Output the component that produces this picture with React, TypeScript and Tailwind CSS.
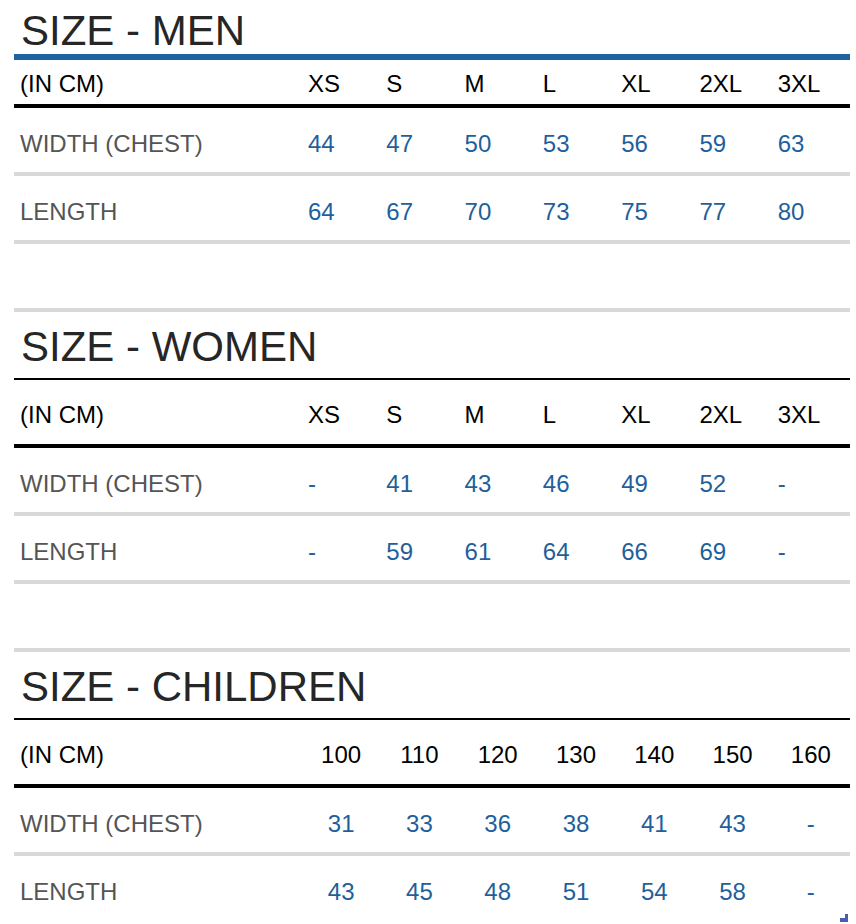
type Section = {
  title: string;
  sizes: string[];
  rows: { label: string; values: string[] }[];
  center?: boolean;
};

const sections: Section[] = [
  {
    title: "SIZE - MEN",
    sizes: ["XS", "S", "M", "L", "XL", "2XL", "3XL"],
    rows: [
      { label: "WIDTH (CHEST)", values: ["44", "47", "50", "53", "56", "59", "63"] },
      { label: "LENGTH", values: ["64", "67", "70", "73", "75", "77", "80"] },
    ],
  },
  {
    title: "SIZE - WOMEN",
    sizes: ["XS", "S", "M", "L", "XL", "2XL", "3XL"],
    rows: [
      { label: "WIDTH (CHEST)", values: ["-", "41", "43", "46", "49", "52", "-"] },
      { label: "LENGTH", values: ["-", "59", "61", "64", "66", "69", "-"] },
    ],
  },
  {
    title: "SIZE - CHILDREN",
    sizes: ["100", "110", "120", "130", "140", "150", "160"],
    rows: [
      { label: "WIDTH (CHEST)", values: ["31", "33", "36", "38", "41", "43", "-"] },
      { label: "LENGTH", values: ["43", "45", "48", "51", "54", "58", "-"] },
    ],
    center: true,
  },
];

function SizeTable({ section, first, last }: { section: Section; first: boolean; last: boolean }) {
  const cell = section.center ? "text-center" : "pl-[6px]";
  return (
    <div>
      {/* title */}
      <div
        className={
          first
            ? "h-[54px] pt-[7px] pl-[7px] text-[42px] leading-[48px] text-[#262626]"
            : "h-[66px] pt-[11px] pl-[7px] text-[42px] leading-[48px] text-[#262626]"
        }
      >
        {section.title}
      </div>
      <div className={first ? "h-[6px] bg-[#1f64a0]" : "h-[2px] bg-black"} />

      {/* header */}
      <div
        className={
          first
            ? "grid grid-cols-[288px_repeat(7,1fr)] h-[48px] pt-[10px] text-[24px] leading-[28px] text-black border-b-4 border-black"
            : "grid grid-cols-[288px_repeat(7,1fr)] h-[68px] pt-[21px] text-[24px] leading-[28px] text-black border-b-4 border-black"
        }
      >
        <div className="pl-[6px]">(IN CM)</div>
        {section.sizes.map((s) => (
          <div key={s} className={cell}>
            {s}
          </div>
        ))}
      </div>

      {section.rows.map((row, i) => {
        const isLast = last && i === section.rows.length - 1;
        return (
          <div
            key={row.label}
            className={
              isLast
                ? "grid grid-cols-[288px_repeat(7,1fr)] h-[64px] pt-[22px] text-[24px] leading-[28px]"
                : "grid grid-cols-[288px_repeat(7,1fr)] h-[68px] pt-[22px] text-[24px] leading-[28px] border-b-4 border-[#d9d9d9]"
            }
          >
            <div className="pl-[6px] text-[#555555]">{row.label}</div>
            {row.values.map((v, j) => (
              <div key={j} className={cell + " text-[#1f5f9b]"}>
                {v}
              </div>
            ))}
          </div>
        );
      })}

      {/* empty spacer row between tables */}
      {!last && <div className="h-[68px] border-b-4 border-[#d9d9d9]" />}
    </div>
  );
}

export default function App() {
  return (
    <div
      className="relative h-[924px] w-[856px] overflow-hidden bg-white"
      style={{ fontFamily: '"Liberation Sans", Arial, sans-serif' }}
    >
      <div className="ml-[14px] w-[836px]">
        {sections.map((s, i) => (
          <SizeTable key={s.title} section={s} first={i === 0} last={i === sections.length - 1} />
        ))}
      </div>

      {/* little corner mark */}
      <svg className="absolute left-[840px] top-[914px]" width="8" height="8" viewBox="0 0 8 8">
        <rect x="5" y="0" width="3" height="8" fill="#4b5cb3" />
        <rect x="0" y="4" width="8" height="4" fill="#4b5cb3" />
      </svg>
    </div>
  );
}
